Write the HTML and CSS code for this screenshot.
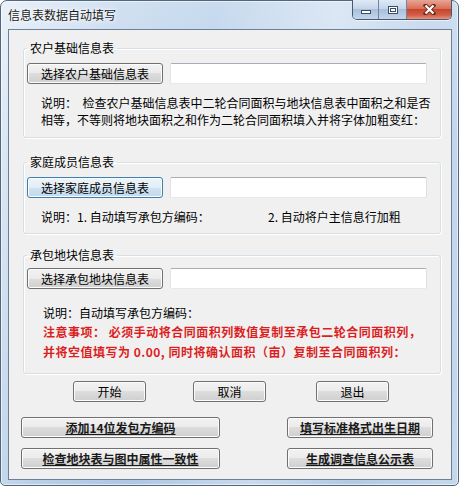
FILE: index.html
```html
<!doctype html>
<html>
<head>
<meta charset="utf-8">
<title>信息表数据自动填写</title>
<link rel="stylesheet" href="styles.css">
</head>
<body>
<div class="window">
	<div class="titlebar">
		<span class="caption">信息表数据自动填写</span>
		<div class="ctrl">
			<span class="ctrl-min"><i></i></span>
			<span class="ctrl-max"><i></i></span>
			<span class="ctrl-close">
				<svg width="13" height="11" viewBox="0 0 13 11">
					<path d="M2.5 1.5 L10.5 9.5 M10.5 1.5 L2.5 9.5" stroke="#6b2a1c" stroke-width="4" stroke-linecap="square"/>
					<path d="M2.5 1.5 L10.5 9.5 M10.5 1.5 L2.5 9.5" stroke="#fff" stroke-width="2.2"/>
				</svg>
			</span>
		</div>
	</div>

	<div class="client">
		<fieldset class="group g1">
			<legend>农户基础信息表</legend>
			<div class="pick">
				<button class="btn btn-pick">选择农户基础信息表</button>
				<input class="path" type="text">
			</div>
			<p class="note">说明：&nbsp;&nbsp;检查农户基础信息表中二轮合同面积与地块信息表中面积之和是否<br>相等，不等则将地块面积之和作为二轮合同面积填入并将字体加粗变红：</p>
		</fieldset>

		<fieldset class="group g2">
			<legend>家庭成员信息表</legend>
			<div class="pick">
				<button class="btn btn-pick btn-focus">选择家庭成员信息表</button>
				<input class="path" type="text">
			</div>
			<p class="note"><span class="note-item">说明：1. 自动填写承包方编码：</span>2. 自动将户主信息行加粗</p>
		</fieldset>

		<fieldset class="group g3">
			<legend>承包地块信息表</legend>
			<div class="pick">
				<button class="btn btn-pick">选择承包地块信息表</button>
				<input class="path" type="text">
			</div>
			<p class="note">说明：自动填写承包方编码：</p>
			<p class="warn">注意事项：&nbsp;必须手动将合同面积列数值复制至承包二轮合同面积列，<br>并将空值填写为 0.00, 同时将确认面积（亩）复制至合同面积列：</p>
		</fieldset>

		<div class="actions">
			<button class="btn btn-act">开始</button>
			<button class="btn btn-act">取消</button>
			<button class="btn btn-act btn-exit">退出</button>
		</div>

		<div class="tools">
			<button class="btn btn-tool">添加14位发包方编码</button>
			<button class="btn btn-tool">填写标准格式出生日期</button>
			<button class="btn btn-tool">检查地块表与图中属性一致性</button>
			<button class="btn btn-tool">生成调查信息公示表</button>
		</div>
	</div>
</div>
</body>
</html>
```

FILE: styles.css
```css
*{margin:0;padding:0;box-sizing:border-box;}
body{width:459px;height:486px;overflow:hidden;background:#fff;font:12px "Noto Sans CJK SC","Liberation Sans",sans-serif;color:#000;}

/* window frame */
.window{display:flex;flex-direction:column;width:459px;height:486px;padding:0 6px 5px 7px;border:1px solid #52667e;border-radius:7px 7px 5px 5px;
 background:
  linear-gradient(100deg,rgba(255,255,255,.6) 0,rgba(255,255,255,.15) 22%,rgba(255,255,255,0) 40%,rgba(255,255,255,.35) 62%,rgba(255,255,255,.05) 80%,rgba(255,255,255,.3) 100%),
  linear-gradient(#c9dbef,#b8cfe9 30%,#aec7e3);
 box-shadow:inset 0 0 0 1px rgba(255,255,255,.55);}
.titlebar{display:flex;align-items:flex-start;height:28px;flex:none;}
.caption{margin-top:6px;line-height:16px;font-size:12px;color:#1b1b1b;text-shadow:0 0 6px #fff,0 0 3px #fff;}
.ctrl{display:flex;margin-left:auto;margin-top:-1px;height:20px;border:1px solid #475a72;border-top:0;border-radius:0 0 5px 5px;overflow:hidden;box-shadow:0 1px 0 rgba(255,255,255,.6);}
.ctrl span{display:flex;align-items:center;justify-content:center;height:100%;}
.ctrl-min,.ctrl-max{width:26px;border-right:1px solid #6e84a0;background:linear-gradient(#dfe9f5,#c5d6ea 45%,#a9bfdb 50%,#c3d6ec);}
.ctrl-max{width:28px;}
.ctrl-min i{width:10px;height:4px;margin-top:5px;background:#fff;border:1px solid #3b4c63;}
.ctrl-max i{width:10px;height:8px;border:1px solid #3b4c63;box-shadow:inset 0 0 0 1px #fff,inset 0 0 0 2px #3b4c63;background:#fff;}
.ctrl-close{width:44px;background:linear-gradient(#e8a595,#d9705a 45%,#c7442a 50%,#d2604a 80%,#e9947c);}

/* client area */
.client{flex:1;display:flex;flex-direction:column;background:#f0f0f0;border:1px solid #6d8098;}

.group{margin:0 10px 0 14px;padding:0 0 0 3px;border:1px solid #d5dfe5;border-radius:3px;box-shadow:1px 1px 0 #fff,inset 1px 1px 0 #fff;min-width:0;}
.group legend{padding:0 3px;font-size:12px;line-height:12px;}
.g1{margin-top:12px;padding-bottom:9px;}
.g2{margin-top:18px;padding-bottom:8px;}
.g3{margin-top:15px;padding-bottom:11px;}

.pick{display:flex;margin-top:9px;}
.g3 .pick{margin-top:7px;}
.path{width:257px;height:21px;margin-left:7px;background:#fff;border:1px solid;border-color:#abadb3 #dbdfe6 #e3e9ef #e2e3ea;border-radius:2px;}

.note{margin:10px 0 0 14px;line-height:17px;white-space:nowrap;}
.g3 .note{margin:15px 0 0 16px;}
.note-item{display:inline-block;width:227px;}
.warn{margin:1px 0 0 16px;line-height:20px;white-space:nowrap;color:#dc1e1e;font-weight:bold;letter-spacing:.5px;}

/* buttons */
.btn{height:21px;border:1px solid #707070;border-radius:3px;background:linear-gradient(#f2f2f2,#ebebeb 50%,#dddddd 50%,#cfcfcf);box-shadow:inset 0 0 0 1px #fcfcfc;font:12px "Noto Sans CJK SC","Liberation Sans",sans-serif;line-height:19px;color:#000;}
.btn-pick{width:136px;}
.btn-focus{border-color:#3c7fb1;background:linear-gradient(#eef5fb,#e2edf7 50%,#d0e2f1 50%,#c4d9ec);}

.actions{display:flex;gap:47px;margin-top:7px;padding-left:64px;}
.btn-act{width:73px;}
.btn-exit{margin-left:3px;}

.tools{display:grid;grid-template-columns:199px 146px;column-gap:67px;row-gap:10px;margin-top:15px;padding-left:12px;}
.btn-tool{font-weight:bold;text-decoration:underline;color:#1a1a1a;}
```
